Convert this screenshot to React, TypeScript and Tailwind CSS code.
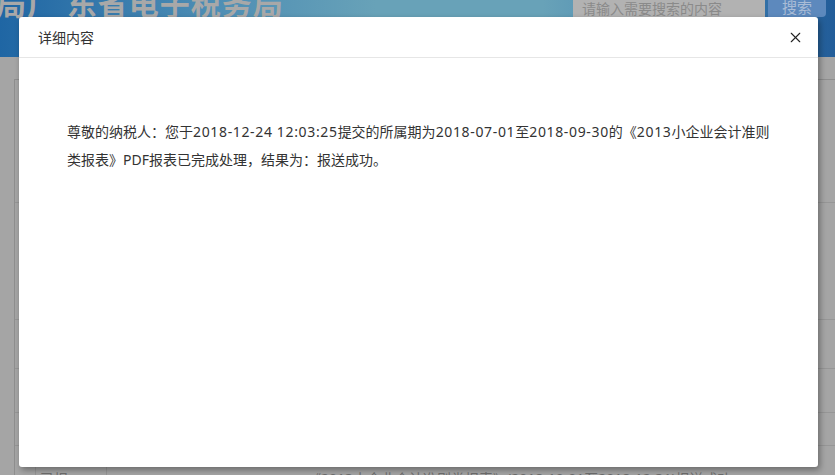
import { X } from "lucide-react";

const font = { fontFamily: '"Noto Sans", "Noto Sans CJK SC", sans-serif' };

function Num({ children }: { children: string }) {
  return <span className="tracking-[0.65px]">{children}</span>;
}

function Backdrop() {
  return (
    <div className="w-[835px] h-[475px] overflow-hidden bg-[#a5a5a5]">
      {/* site header, dimmed */}
      <div className="h-[57px] flex bg-[linear-gradient(90deg,#1f66a4_0%,#4d8db4_25%,#68a2b8_45%,#68a2b8_65%,#3f7fb0_85%,#225d99_100%)]">
        <div className="ml-[-4px] mt-[-14px] text-[30px] font-bold text-[#a8a8a8] whitespace-nowrap leading-[36px] tracking-[1px]">
          局广 东省电子税务局
        </div>
        <div className="ml-auto flex items-start h-[17px] mr-[9px]">
          <div className="w-[192px] h-[17px] bg-[#b2b2b2] text-[14px] leading-[17px] text-[#8a8a8a] pl-[9px] overflow-hidden">
            请输入需要搜索的内容
          </div>
          <div className="ml-[3px] w-[58px] h-[17px] bg-[#5d89bd] text-[15px] leading-[15px] text-[#a9bcd6] text-center overflow-hidden rounded-br-sm">
            搜索
          </div>
        </div>
      </div>
      {/* page table, dimmed */}
      <div className="mt-[22px] ml-[14px] border-t border-l border-[#8e8e8e] h-[420px] flex flex-col">
        <div className="h-[123px] border-b border-[#969696]" />
        <div className="h-[117px] border-b border-[#969696]" />
        <div className="h-[49px] border-b border-[#969696]" />
        <div className="h-[44px] border-b border-[#969696]" />
        <div className="h-[33px] border-b border-[#969696]" />
        <div className="flex flex-1 text-[14px] text-[#6e6e6e]">
          <div className="w-[21px] border-r border-[#969696]" />
          <div className="w-[71px] border-r border-[#969696] pt-[22px] pl-[4px]">已报</div>
          <div className="flex-1 pt-[22px] pl-[200px] whitespace-nowrap">
            《2013小企业会计准则类报表》(2018-10-01至2018-12-31)报送成功
          </div>
        </div>
      </div>
    </div>
  );
}

export default function App() {
  return (
    <div className="relative w-[835px] h-[475px] overflow-hidden" style={font}>
      <Backdrop />
      <div className="absolute left-[19px] top-[17px] w-[799px] h-[450px] bg-white rounded-[3px] shadow-[2px_3px_6px_rgba(0,0,0,0.35)] flex flex-col">
        <div className="h-[41px] flex items-center justify-between pl-[19px] pr-[14px] border-b border-[#e6e6e6]">
          <span className="text-[14px] text-[#333]">详细内容</span>
          <X size={17} strokeWidth={1.6} className="text-[#222]" />
        </div>
        <div className="pt-[60px] px-[48px]">
          <p className="text-[14px] leading-[28px] text-[#333]">
            尊敬的纳税人：您于<Num>2018-12-24 12:03:25</Num>提交的所属期为<Num>2018-07-01</Num>至
            <Num>2018-09-30</Num>的《<Num>2013</Num>小企业会计准则类报表》PDF报表已完成处理，结果为：报送成功。
          </p>
        </div>
      </div>
    </div>
  );
}
